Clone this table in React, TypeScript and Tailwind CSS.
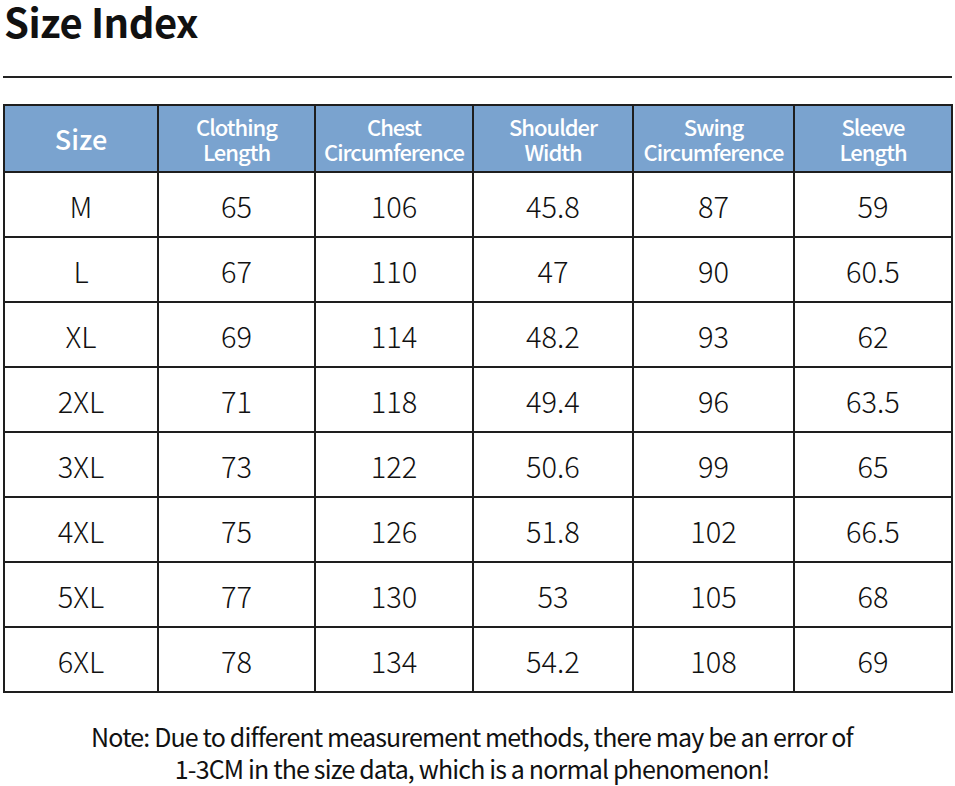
import React from "react";

const rows: string[][] = [
  ["M", "65", "106", "45.8", "87", "59"],
  ["L", "67", "110", "47", "90", "60.5"],
  ["XL", "69", "114", "48.2", "93", "62"],
  ["2XL", "71", "118", "49.4", "96", "63.5"],
  ["3XL", "73", "122", "50.6", "99", "65"],
  ["4XL", "75", "126", "51.8", "102", "66.5"],
  ["5XL", "77", "130", "53", "105", "68"],
  ["6XL", "78", "134", "54.2", "108", "69"],
];

const headers: string[][] = [
  ["Size"],
  ["Clothing", "Length"],
  ["Chest", "Circumference"],
  ["Shoulder", "Width"],
  ["Swing", "Circumference"],
  ["Sleeve", "Length"],
];

const widths = ["w-[154px]", "w-[157px]", "w-[158px]", "w-[160px]", "w-[161px]", "w-[158px]"];

export default function App() {
  return (
    <div className="w-[955px] h-[786px] bg-white text-black overflow-hidden" style={{ fontFamily: '"Noto Sans CJK SC", "Noto Sans", sans-serif' }}>
      <div className="pl-[4px] pt-0">
        <h1 className="text-[40px] font-bold leading-[42px] tracking-[-0.5px] text-[#111]">Size Index</h1>
      </div>
      <div className="mx-[3px] mt-[34px] h-[2px] bg-[#222]" />
      <div className="mt-[26px] ml-[3px]">
        <table className="border-collapse border-2 border-[#1e1e1e] table-fixed">
          <thead>
            <tr className="h-[67px] bg-[#7aa3cf]">
              {headers.map((h, i) => (
                <th
                  key={i}
                  className={`${widths[i]} border-2 border-[#1e1e1e] text-white font-medium p-0 align-middle ${i === 0 ? "text-[27px] leading-[30px]" : "text-[22px] leading-[25px] tracking-[-1px]"}`}
                >
                  {h.map((l, j) => (
                    <div key={j} className="leading-[25px]">{l}</div>
                  ))}
                </th>
              ))}
            </tr>
          </thead>
          <tbody>
            {rows.map((r, i) => (
              <tr key={i} className="h-[65px]">
                {r.map((c, j) => (
                  <td key={j} className="border-2 border-[#1e1e1e] text-center text-[29px] font-light leading-[32px] p-0 text-[#111]">
                    {c}
                  </td>
                ))}
              </tr>
            ))}
          </tbody>
        </table>
      </div>
      <div className="mt-[27px] w-[944px] text-center text-[25px] leading-[32px] font-normal text-[#111] tracking-[-0.85px]">
        <div>Note: Due to different measurement methods, there may be an error of</div>
        <div>1-3CM in the size data, which is a normal phenomenon!</div>
      </div>
    </div>
  );
}
